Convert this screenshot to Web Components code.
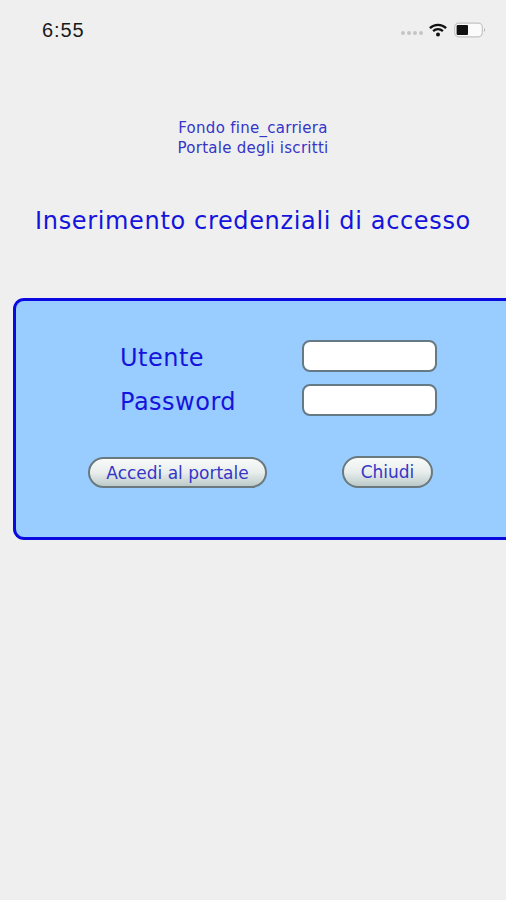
<!DOCTYPE html>
<html lang="it">
<head>
<meta charset="utf-8">
<title>Portale degli iscritti</title>
<style>
    html, body {
        margin: 0;
        height: 100%;
        background-color: #efefef;
        overflow: hidden;
    }

    body {
        font-family: "DejaVu Sans", sans-serif;
        color: #1414dc;
    }
</style>
</head>
<body>
<login-page></login-page>

<script>
class StatusBar extends HTMLElement {
    constructor() {
        super();
        this.attachShadow({ mode: 'open' });
        this.shadowRoot.innerHTML = `
            <style>
                :host {
                    display: flex;
                    align-items: center;
                    justify-content: space-between;
                    height: 60px;
                    padding: 0 20px 0 42px;
                    box-sizing: border-box;
                }

                .time {
                    font-family: "Liberation Sans", sans-serif;
                    font-size: 20px;
                    color: #1a1a1a;
                    letter-spacing: 0.9px;
                }

                .icons {
                    display: flex;
                    align-items: center;
                    gap: 6px;
                }

                .battery {
                    margin-left: 1px;
                }

                .dots {
                    display: flex;
                    gap: 2px;
                    margin-top: 5px;
                }

                .dots span {
                    width: 4px;
                    height: 4px;
                    border-radius: 50%;
                    background-color: #c4c4c4;
                }

                svg {
                    display: block;
                }
            </style>
            <span class="time">6:55</span>
            <div class="icons">
                <div class="dots"><span></span><span></span><span></span><span></span></div>
                <svg width="18" height="14" viewBox="0 0 20 15">
                    <path d="M1 5.5 A13 13 0 0 1 19 5.5" fill="none" stroke="#111" stroke-width="2.6"/>
                    <path d="M4.6 8.7 A8 8 0 0 1 15.4 8.7" fill="none" stroke="#111" stroke-width="2.6"/>
                    <circle cx="10" cy="12.6" r="2.2" fill="#111"/>
                </svg>
                <svg class="battery" width="32" height="16" viewBox="0 0 32 16">
                    <rect x="0.7" y="1.2" width="27.6" height="13.6" rx="4" fill="#fbfbfb" stroke="#c4c4c4" stroke-width="1.2"/>
                    <rect x="2.6" y="3" width="11.4" height="10" rx="1" fill="#111"/>
                    <path d="M30 6 Q31.6 8 30 10 Z" fill="#8a8a8a"/>
                </svg>
            </div>
        `;
    }
}

class PageTitle extends HTMLElement {
    constructor() {
        super();
        this.attachShadow({ mode: 'open' });
        this.shadowRoot.innerHTML = `
            <style>
                :host {
                    display: block;
                    text-align: center;
                    padding-top: 58px;
                }

                .sub {
                    font-size: 15px;
                    line-height: 20px;
                    letter-spacing: 0.28px;
                    color: #3535c8;
                }

                h1 {
                    margin: 48px 0 0;
                    font-size: 24px;
                    line-height: 30px;
                    letter-spacing: 0.65px;
                    font-weight: normal;
                    color: #1414dc;
                }
            </style>
            <div class="sub"><slot name="sub"></slot></div>
            <h1><slot></slot></h1>
        `;
    }
}

class TextField extends HTMLElement {
    constructor() {
        super();
        this.attachShadow({ mode: 'open' });
        this.shadowRoot.innerHTML = `
            <style>
                :host {
                    display: block;
                    width: 135px;
                    height: 32px;
                    box-sizing: border-box;
                    background-color: #fff;
                    border: 2px solid #667a86;
                    border-radius: 8px;
                }
            </style>
        `;
    }
}

class GelButton extends HTMLElement {
    constructor() {
        super();
        this.attachShadow({ mode: 'open' });
        this.shadowRoot.innerHTML = `
            <style>
                :host {
                    display: flex;
                    align-items: center;
                    justify-content: center;
                    height: 31px;
                    box-sizing: border-box;
                    border: 2px solid #6a797d;
                    border-radius: 16px;
                    background: linear-gradient(to bottom, #f8faf8 0%, #e8eeec 50%, #bccaca 100%);
                    font-size: 17px;
                    color: #3535c8;
                }
            </style>
            <slot></slot>
        `;
    }
}

class LoginPanel extends HTMLElement {
    constructor() {
        super();
        this.attachShadow({ mode: 'open' });
        this.shadowRoot.innerHTML = `
            <style>
                :host {
                    display: block;
                    box-sizing: border-box;
                    height: 242px;
                    margin: 62px 0 0 13px;
                    padding: 39px 0 0 104px;
                    background-color: #99ccff;
                    border: 3px solid #0a0ae0;
                    border-right: 0;
                    border-radius: 11px 0 0 11px;
                }

                .rows {
                    display: grid;
                    grid-template-columns: 182px 135px;
                    row-gap: 12px;
                    align-items: center;
                }

                label {
                    font-size: 24px;
                    line-height: 28px;
                    padding-top: 4px;
                    letter-spacing: 0.5px;
                    color: #1414dc;
                }

                .actions {
                    display: flex;
                    margin: 41px 0 0 -32px;
                }

                .access {
                    width: 179px;
                }

                .close {
                    width: 91px;
                    margin-left: 75px;
                    margin-top: -1px;
                    height: 32px;
                }
            </style>
            <div class="rows">
                <label>Utente</label>
                <text-field></text-field>
                <label>Password</label>
                <text-field></text-field>
            </div>
            <div class="actions">
                <gel-button class="access">Accedi al portale</gel-button>
                <gel-button class="close">Chiudi</gel-button>
            </div>
        `;
    }
}

class LoginPage extends HTMLElement {
    constructor() {
        super();
        this.attachShadow({ mode: 'open' });
        this.shadowRoot.innerHTML = `
            <style>
                :host {
                    display: block;
                }
            </style>
            <status-bar></status-bar>
            <page-title>
                <span slot="sub">Fondo fine_carriera<br>Portale degli iscritti</span>
                Inserimento credenziali di accesso
            </page-title>
            <login-panel></login-panel>
        `;
    }
}

customElements.define('status-bar', StatusBar);
customElements.define('page-title', PageTitle);
customElements.define('text-field', TextField);
customElements.define('gel-button', GelButton);
customElements.define('login-panel', LoginPanel);
customElements.define('login-page', LoginPage);
</script>
</body>
</html>
